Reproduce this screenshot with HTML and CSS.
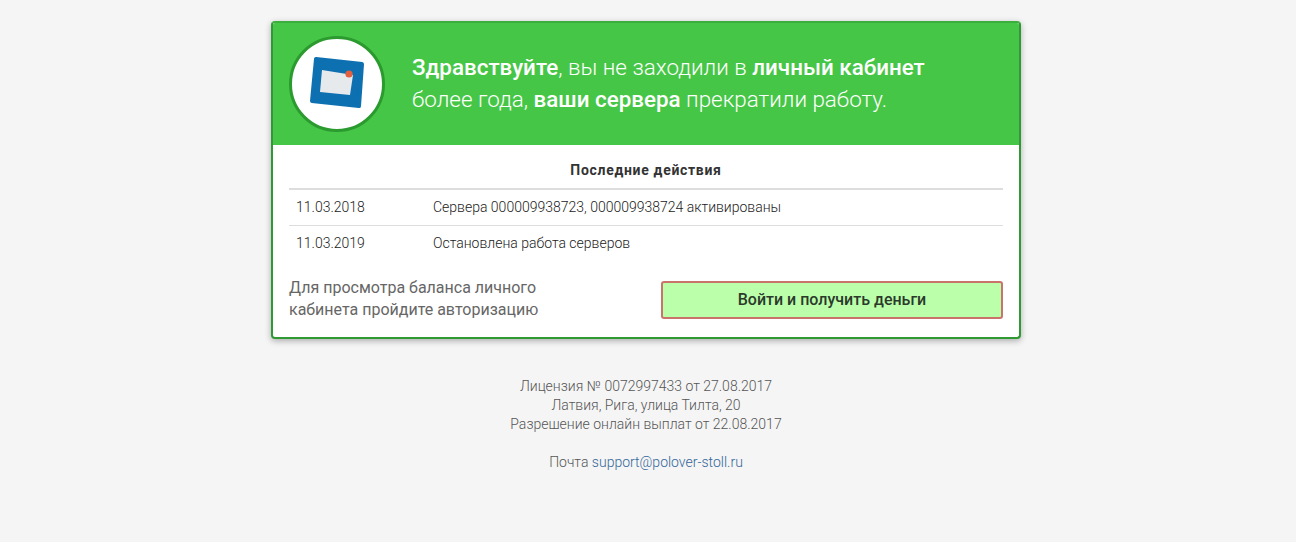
FILE: index.html
```html
<!DOCTYPE html>
<html lang="ru">
<head>
  <meta charset="UTF-8" />
  <title>Личный кабинет</title>
  <link rel="stylesheet" href="styles.css">
</head>
<body>
  <div class="card">
    <div class="card-head">
      <div class="avatar">
        <svg width="60" height="60" viewBox="0 0 60 60">
          <defs>
            <filter id="soft"><feGaussianBlur stdDeviation="0.6" /></filter>
          </defs>
          <g filter="url(#soft)">
            <path d="M9 5 L55 10 L52 52 L5 47 Z" fill="#0f6fb0" stroke="#0f6fb0" stroke-width="4" stroke-linejoin="round" />
            <path d="M15 16 L46 21 L43 41 L13 38 Z" fill="#e6eaec" />
            <circle cx="42" cy="20" r="3.6" fill="#e2603f" />
          </g>
        </svg>
      </div>
      <p class="head-text"><b>Здравствуйте</b>, вы не заходили в <b>личный кабинет</b><br>более года, <b>ваши сервера</b> прекратили работу.</p>
    </div>
    <div class="card-body">
      <h3 class="log-title">Последние действия</h3>
      <div class="log">
        <div class="log-row">
          <span class="log-date">11.03.2018</span>
          <span>Сервера 000009938723, 000009938724 активированы</span>
        </div>
        <div class="log-row">
          <span class="log-date">11.03.2019</span>
          <span>Остановлена работа серверов</span>
        </div>
      </div>
      <div class="login">
        <p class="login-note">Для просмотра баланса личного<br>кабинета пройдите авторизацию</p>
        <a href="#" class="login-btn">Войти и получить деньги</a>
      </div>
    </div>
  </div>
  <footer class="footer">
    <p>Лицензия № 0072997433 от 27.08.2017</p>
    <p>Латвия, Рига, улица Тилта, 20</p>
    <p>Разрешение онлайн выплат от 22.08.2017</p>
    <p class="mail">Почта <a href="#">support@polover-stoll.ru</a></p>
  </footer>
</body>
</html>
```

FILE: styles.css
```css
* {
  margin: 0; padding: 0; box-sizing: border-box;
  font-family: 'Roboto', sans-serif;
}
body {
  background: #f5f5f5;
  color: #333;
  padding-top: 21px;
}
.card {
  width: 750px;
  height: 318px;
  margin-left: 271px;
  background: #fff;
  border: 2px solid #2f9a33;
  border-top-color: #3aaf3d;
  border-radius: 4px;
  box-shadow: 0 2px 6px rgba(0,0,0,0.3);
  overflow: hidden;
}
.card-head {
  height: 122px;
  background: #46c646;
  display: flex;
  align-items: center;
  padding-left: 16px;
}
.avatar {
  width: 96px;
  height: 96px;
  flex: none;
  border-radius: 50%;
  background: #fff;
  border: 3px solid #2b9a2f;
  display: flex;
  align-items: center;
  justify-content: center;
}
.head-text {
  margin: 0 0 2px 27px;
  color: #fff;
  font-size: 22.4px;
  font-weight: 300;
  line-height: 32px;
}
.head-text b { font-weight: 500; }
.card-body {
  padding: 0 16px;
}
.log-title {
  font-size: 14px;
  font-weight: 700;
  line-height: 16px;
  letter-spacing: 0.7px;
  text-align: center;
  padding: 17px 0 10px;
  border-bottom: 2px solid #ddd;
}
.log-row {
  display: flex;
  font-size: 14px;
  font-weight: 300;
  color: #222;
  line-height: 16px;
  height: 36px;
  align-items: center;
  padding: 0 0 2px 7px;
  border-bottom: 1px solid #ddd;
}
.log-row:last-child { border-bottom: none; }
.log-date { width: 137px; }
.login {
  display: flex;
  justify-content: space-between;
  align-items: center;
  margin-top: 15px;
}
.login-note {
  font-size: 16px;
  line-height: 22px;
  color: #666;
  margin-bottom: 1px;
}
.login-btn {
  width: 342px;
  height: 38px;
  display: flex;
  align-items: center;
  justify-content: center;
  background: #bbffaa;
  border: 2px solid #c9736b;
  border-radius: 3px;
  color: #2b3a2b;
  font-size: 16px;
  font-weight: 500;
  text-decoration: none;
}
.footer {
  margin-top: 38px;
  margin-left: 271px;
  width: 750px;
  text-align: center;
  font-size: 14px;
  font-weight: 300;
  line-height: 19px;
  color: #555;
}
.mail { margin-top: 19px; }
.footer a {
  color: #336699;
  text-decoration: none;
}
```
